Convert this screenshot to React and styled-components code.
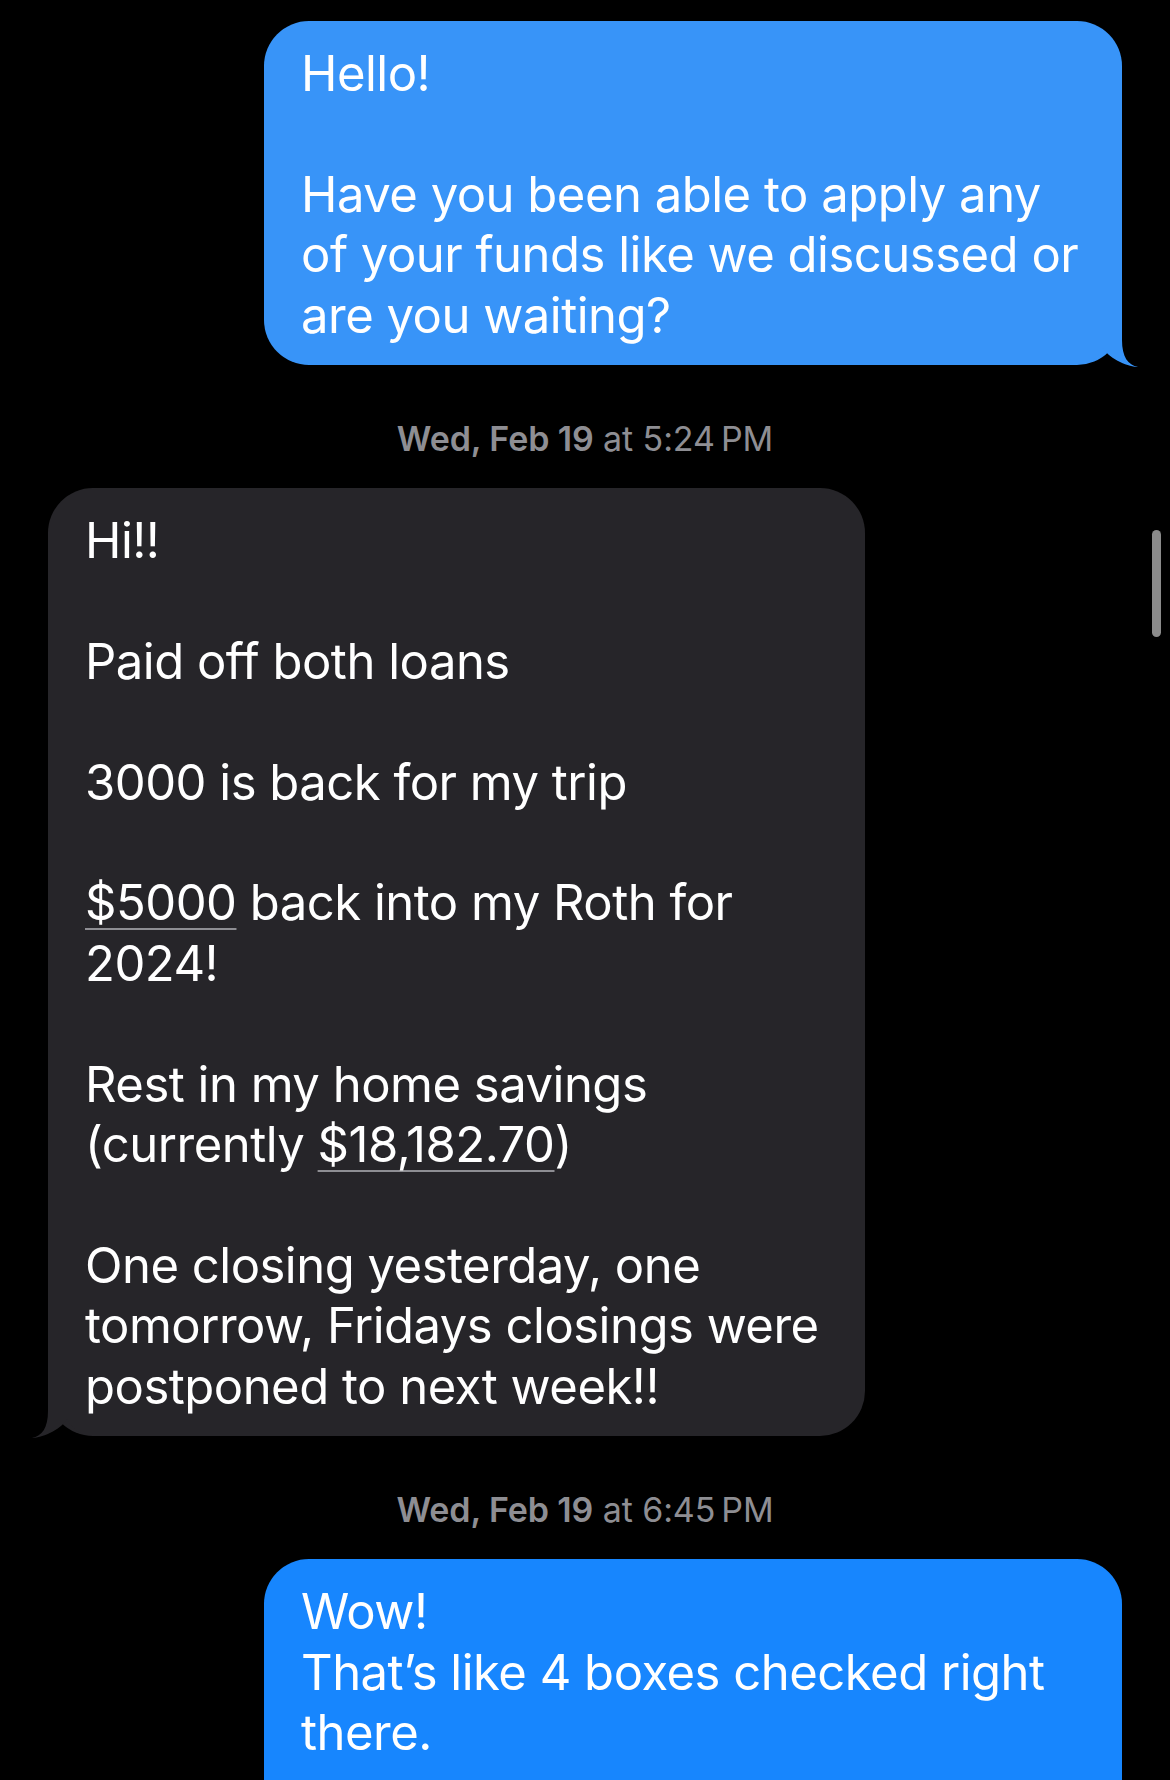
import React from 'react';
import styled, { createGlobalStyle } from 'styled-components';

const GlobalStyle = createGlobalStyle`
  html, body {
    margin: 0;
    padding: 0;
    background: #000;
  }
  body {
    font-family: Inter, "Noto Sans", "Liberation Sans", sans-serif;
    -webkit-font-smoothing: antialiased;
  }
`;

const Screen = styled.div`
  position: relative;
  width: 1170px;
  height: 1780px;
  box-sizing: border-box;
  padding: 21px 48px 0;
  overflow: hidden;
  background: #000;
  display: flex;
  flex-direction: column;
`;

const Row = styled.div`
  display: flex;
  justify-content: ${p => (p.$mine ? 'flex-end' : 'flex-start')};
`;

const Bubble = styled.div`
  position: relative;
  width: ${p => p.$width}px;
  box-sizing: border-box;
  padding: 23px 30px ${p => p.$bottom || 19}px 37px;
  border-radius: 45px;
  background: ${p => p.$bg};
  color: #fff;
  font-size: 49px;
  line-height: 60.4px;
  letter-spacing: -0.5px;
  white-space: pre-line;
`;

const Tail = styled.svg`
  position: absolute;
  bottom: -2px;
  width: 50px;
  height: 47px;
  ${p => (p.$mine ? 'right: -16px;' : 'left: -16px; transform: scaleX(-1);')}
`;

const Stamp = styled.div`
  margin: 54px 0 29px;
  text-align: center;
  color: #8e8e93;
  font-size: 34px;
  line-height: 40px;
  letter-spacing: -0.1px;

  b {
    font-weight: 600;
  }
`;

const Detected = styled.span`
  text-decoration: underline;
  text-decoration-color: #8e8e93;
  text-decoration-thickness: 2px;
  text-underline-offset: 8px;
`;

const ScrollThumb = styled.div`
  position: absolute;
  left: 1152px;
  top: 530px;
  width: 9px;
  height: 107px;
  border-radius: 5px;
  background: #8b8b8b;
`;

const BubbleTail = ({ mine, color }) => (
  <Tail $mine={mine} viewBox="0 0 50 47">
    <path
      d="M0 0 H34 V20 C34 37 40 45 50 47 C42 47 22 40 15 28 C11 35 6 40 0 43 Z"
      fill={color}
    />
  </Tail>
);

const Message = ({ mine, width, bg, tail = true, bottom, children }) => (
  <Row $mine={mine}>
    <Bubble $width={width} $bg={bg} $bottom={bottom}>
      {children}
      {tail && <BubbleTail mine={mine} color={bg} />}
    </Bubble>
  </Row>
);

const Timestamp = ({ day, time }) => (
  <Stamp>
    <b>{day}</b> at {time}
  </Stamp>
);

export default function App() {
  return (
    <>
      <GlobalStyle />
      <Screen>
        <Message mine width={858} bg="#3894f8">
          {'Hello!\n\nHave you been able to apply any\nof your funds like we discussed or\nare you waiting?'}
        </Message>

        <Timestamp day="Wed, Feb 19" time={'5:24\u2009PM'} />

        <Message width={817} bg="#262529">
          {'Hi!!\n\nPaid off both loans\n\n3000 is back for my trip\n\n'}
          <Detected>$5000</Detected>
          {' back into my Roth for\n2024!\n\nRest in my home savings\n(currently '}
          <Detected>$18,182.70</Detected>
          {')\n\nOne closing yesterday, one\ntomorrow, Fridays closings were\npostponed to next week!!'}
        </Message>

        <Timestamp day="Wed, Feb 19" time={'6:45\u2009PM'} />

        <Message mine width={858} bg="#1786fe" tail={false} bottom={120}>
          {'Wow!\nThat\u2019s like 4 boxes checked right\nthere.'}
        </Message>

        <ScrollThumb />
      </Screen>
    </>
  );
}
